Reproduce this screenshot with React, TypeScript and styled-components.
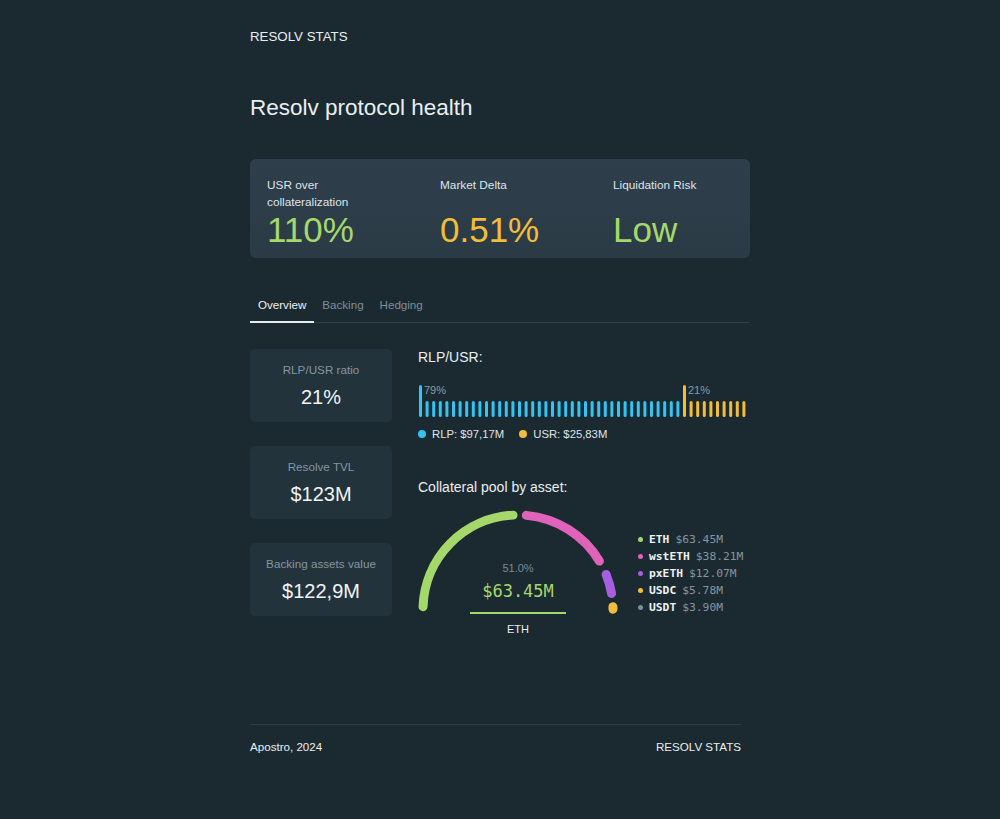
import React from 'react';
import styled, { createGlobalStyle } from 'styled-components';

const GlobalStyle = createGlobalStyle`
  html, body {
    margin: 0;
    padding: 0;
    background: #1b2a31;
  }
  body {
    font-family: 'Liberation Sans', Arial, sans-serif;
    color: #e9eef1;
  }
`;

const colors = {
  green: '#a5d86b',
  yellow: '#f1bd3c',
  blue: '#33c4f1',
  pink: '#df63b9',
  purple: '#a55fe0',
  gray: '#8595a0',
};

const Page = styled.div`
  width: 500px;
  margin: 0 auto;
  padding-top: 29px;
  min-height: 819px;
  box-sizing: border-box;
`;

const Brand = styled.div`
  font-size: 13.3px;
  line-height: 16px;
`;

const Title = styled.h1`
  margin: 50px 0 0;
  font-size: 22.5px;
  line-height: 26px;
  font-weight: 400;
`;

const HealthCard = styled.div`
  margin-top: 38px;
  height: 99px;
  box-sizing: border-box;
  background: linear-gradient(180deg, #2e3e4b 0%, #2b3b46 100%);
  border-radius: 6px;
  padding: 18px 17px 0;
  display: grid;
  grid-template-columns: 173px 173px 1fr;
`;

const Metric = styled.div`
  display: flex;
  flex-direction: column;
`;

const MetricLabel = styled.div`
  font-size: 11.8px;
  line-height: 17px;
  height: 34px;
  color: #dfe5e9;
`;

const MetricValue = styled.div<{ $color: string }>`
  margin-top: 2px;
  font-size: 35px;
  line-height: 34px;
  color: ${(p) => p.$color};
`;

const TabList = styled.div`
  margin-top: 32px;
  display: flex;
  border-bottom: 1px solid #2e3f48;
`;

const Tab = styled.div<{ $active?: boolean }>`
  padding: 8px 8px 9px;
  font-size: 11.6px;
  line-height: 14px;
  margin-bottom: -1px;
  color: ${(p) => (p.$active ? '#eef2f4' : '#7f8e98')};
  border-bottom: 2px solid ${(p) => (p.$active ? '#e6ebee' : 'transparent')};
`;

const Content = styled.div`
  margin-top: 26px;
  display: grid;
  grid-template-columns: 142px 1fr;
  column-gap: 26px;
`;

const SideCards = styled.div`
  display: flex;
  flex-direction: column;
  gap: 24px;
`;

const InfoCard = styled.div`
  height: 73px;
  box-sizing: border-box;
  background: #23333b;
  border-radius: 5px;
  padding-top: 14px;
  display: flex;
  flex-direction: column;
  align-items: center;
  gap: 8px;
`;

const InfoLabel = styled.div`
  font-size: 11.7px;
  line-height: 14px;
  color: ${colors.gray};
`;

const InfoValue = styled.div`
  font-size: 20px;
  line-height: 24px;
  color: #f1f4f6;
`;

const ChartsColumn = styled.div`
  display: flex;
  flex-direction: column;
`;

const SectionTitle = styled.div<{ $top?: number }>`
  font-size: 14px;
  line-height: 17px;
  margin-top: ${(p) => p.$top || 0}px;
`;

const BarSvg = styled.svg`
  display: block;
  margin-top: 19px;
`;

const Legend = styled.div`
  margin-top: 10px;
  display: flex;
  gap: 15px;
  font-size: 11.3px;
  line-height: 14px;
  color: #dfe5e9;
`;

const LegendItem = styled.div`
  display: flex;
  align-items: center;
  gap: 6px;
`;

const Dot = styled.span<{ $color: string; $size?: number }>`
  width: ${(p) => p.$size || 8}px;
  height: ${(p) => p.$size || 8}px;
  border-radius: 50%;
  background: ${(p) => p.$color};
  flex-shrink: 0;
`;

const PoolRow = styled.div`
  margin-top: 9px;
  display: flex;
  align-items: flex-start;
  gap: 14px;
`;

const Gauge = styled.div`
  position: relative;
  width: 206px;
  height: 136px;
`;

const GaugeCenter = styled.div`
  position: absolute;
  left: 52px;
  top: 56px;
  width: 96px;
  display: flex;
  flex-direction: column;
  align-items: center;
`;

const GaugePercent = styled.div`
  font-size: 11px;
  line-height: 14px;
  color: #7b8a94;
`;

const GaugeAmount = styled.div`
  margin-top: 5px;
  font-family: 'DejaVu Sans Mono', 'Liberation Mono', monospace;
  font-size: 17px;
  line-height: 22px;
  color: ${colors.green};
`;

const GaugeLine = styled.div`
  margin-top: 10px;
  width: 96px;
  height: 2px;
  background: ${colors.green};
`;

const GaugeAsset = styled.div`
  margin-top: 8px;
  font-size: 11px;
  line-height: 14px;
  color: #e9eef1;
`;

const AssetList = styled.div`
  margin-top: 26px;
  display: flex;
  flex-direction: column;
  font-family: 'DejaVu Sans Mono', 'Liberation Mono', monospace;
  font-size: 11.3px;
  line-height: 17px;
`;

const AssetRow = styled.div`
  display: flex;
  align-items: center;
  gap: 6px;
`;

const AssetName = styled.span`
  color: #eef2f4;
  font-weight: 600;
`;

const AssetValue = styled.span`
  color: #8595a0;
`;

const Footer = styled.footer`
  margin-top: 83px;
  width: 491px;
  border-top: 1px solid #2c3c45;
  padding-top: 15px;
  display: flex;
  justify-content: space-between;
  font-size: 11.6px;
  line-height: 14px;
  color: #e9eef1;
`;

const stats = [
  { label: 'USR over collateralization', value: '110%', color: colors.green },
  { label: 'Market Delta', value: '0.51%', color: colors.yellow },
  { label: 'Liquidation Risk', value: 'Low', color: colors.green },
];

const sideCards = [
  { label: 'RLP/USR ratio', value: '21%' },
  { label: 'Resolve TVL', value: '$123M' },
  { label: 'Backing assets value', value: '$122,9M' },
];

const assets = [
  { name: 'ETH', value: '$63.45M', color: colors.green },
  { name: 'wstETH', value: '$38.21M', color: colors.pink },
  { name: 'pxETH', value: '$12.07M', color: colors.purple },
  { name: 'USDC', value: '$5.78M', color: colors.yellow },
  { name: 'USDT', value: '$3.90M', color: '#7f8d97' },
];

function RatioBars() {
  const total = 50;
  const split = 40;
  const pitch = 6.6;
  return (
    <BarSvg width={331} height={32} viewBox="0 0 331 32">
      {Array.from({ length: total }).map((_, i) => {
        const tall = i === 0 || i === split;
        const h = tall ? 32 : 16;
        return (
          <rect
            key={i}
            x={1 + i * pitch}
            y={32 - h}
            width={3}
            height={h}
            rx={1.5}
            fill={i < split ? colors.blue : colors.yellow}
          />
        );
      })}
      <text x={6} y={9} fontSize={11} fill="#8c9aa3" fontFamily="Liberation Sans, Arial, sans-serif">79%</text>
      <text x={6 + split * pitch} y={9} fontSize={11} fill="#8c9aa3" fontFamily="Liberation Sans, Arial, sans-serif">21%</text>
    </BarSvg>
  );
}

function arc(cx: number, cy: number, r: number, a1: number, a2: number) {
  const rad = (d: number) => (d * Math.PI) / 180;
  const x1 = cx + r * Math.cos(rad(a1));
  const y1 = cy - r * Math.sin(rad(a1));
  const x2 = cx + r * Math.cos(rad(a2));
  const y2 = cy - r * Math.sin(rad(a2));
  return `M ${x1.toFixed(2)} ${y1.toFixed(2)} A ${r} ${r} 0 0 1 ${x2.toFixed(2)} ${y2.toFixed(2)}`;
}

function PoolGauge() {
  const cx = 100;
  const cy = 105;
  const r = 95;
  const segments = [
    { from: 178, to: 93, color: colors.green },
    { from: 85, to: 31, color: colors.pink },
    { from: 22, to: 10, color: colors.purple },
    { from: 2, to: 0.5, color: colors.yellow },
  ];
  return (
    <Gauge>
      <svg width={206} height={120} viewBox="0 0 206 120">
        {segments.map((s) => (
          <path
            key={s.color}
            d={arc(cx, cy, r, s.from, s.to)}
            stroke={s.color}
            strokeWidth={9}
            strokeLinecap="round"
            fill="none"
          />
        ))}
      </svg>
      <GaugeCenter>
        <GaugePercent>51.0%</GaugePercent>
        <GaugeAmount>$63.45M</GaugeAmount>
        <GaugeLine />
        <GaugeAsset>ETH</GaugeAsset>
      </GaugeCenter>
    </Gauge>
  );
}

export default function App() {
  return (
    <>
      <GlobalStyle />
      <Page>
        <Brand>RESOLV STATS</Brand>
        <Title>Resolv protocol health</Title>

        <HealthCard>
          {stats.map((s) => (
            <Metric key={s.label}>
              <MetricLabel>{s.label === 'USR over collateralization' ? <>USR over<br />collateralization</> : s.label}</MetricLabel>
              <MetricValue $color={s.color}>{s.value}</MetricValue>
            </Metric>
          ))}
        </HealthCard>

        <TabList>
          <Tab $active>Overview</Tab>
          <Tab>Backing</Tab>
          <Tab>Hedging</Tab>
        </TabList>

        <Content>
          <SideCards>
            {sideCards.map((c) => (
              <InfoCard key={c.label}>
                <InfoLabel>{c.label}</InfoLabel>
                <InfoValue>{c.value}</InfoValue>
              </InfoCard>
            ))}
          </SideCards>

          <ChartsColumn>
            <SectionTitle>RLP/USR:</SectionTitle>
            <RatioBars />
            <Legend>
              <LegendItem>
                <Dot $color={colors.blue} />
                RLP: $97,17M
              </LegendItem>
              <LegendItem>
                <Dot $color={colors.yellow} />
                USR: $25,83M
              </LegendItem>
            </Legend>

            <SectionTitle $top={38}>Collateral pool by asset:</SectionTitle>
            <PoolRow>
              <PoolGauge />
              <AssetList>
                {assets.map((a) => (
                  <AssetRow key={a.name}>
                    <Dot $color={a.color} $size={5} />
                    <AssetName>{a.name}</AssetName>
                    <AssetValue>{a.value}</AssetValue>
                  </AssetRow>
                ))}
              </AssetList>
            </PoolRow>
          </ChartsColumn>
        </Content>

        <Footer>
          <span>Apostro, 2024</span>
          <span>RESOLV STATS</span>
        </Footer>
      </Page>
    </>
  );
}
